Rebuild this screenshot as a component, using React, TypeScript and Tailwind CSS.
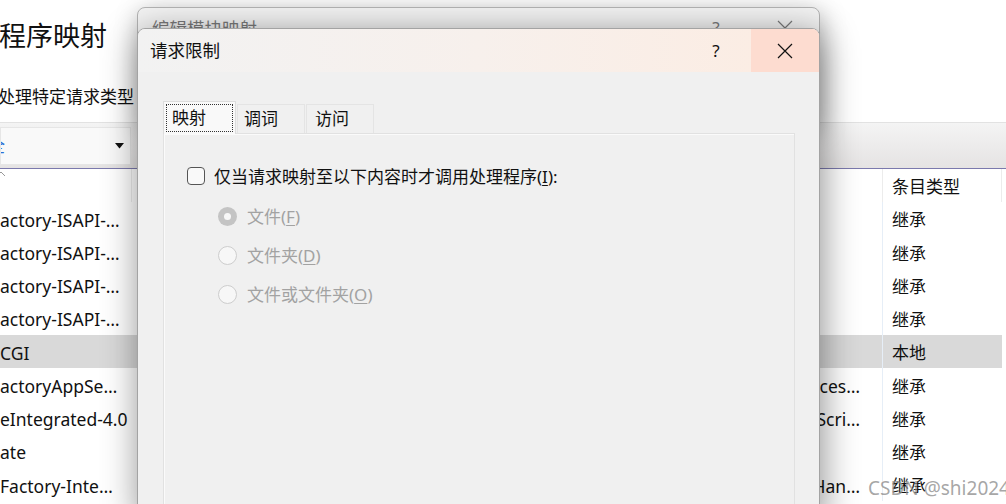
import React from "react";

const rows = [
  { name: "actory-ISAPI-…", path: "", type: "继承" },
  { name: "actory-ISAPI-…", path: "", type: "继承" },
  { name: "actory-ISAPI-…", path: "", type: "继承" },
  { name: "actory-ISAPI-…", path: "", type: "继承" },
  { name: "CGI", path: "", type: "本地", selected: true },
  { name: "actoryAppSe…", path: "System.Web.Services.Protocols.WebServiceHandlerFactory, System.Web.Services…", type: "继承" },
  { name: "eIntegrated-4.0", path: "System.Web.Script.Services.ScriptHandlerFactory, System.Web.Scri…", type: "继承" },
  { name: "ate", path: "", type: "继承" },
  { name: "Factory-Inte…", path: "System.Web.HttpForbiddenHandler, System.Web.HttpForbiddenHan…", type: "继承" },
];

function CloseIcon({ className }: { className?: string }) {
  return (
    <svg width="16" height="16" viewBox="0 0 16 16" className={className}>
      <path d="M1 1L15 15M15 1L1 15" stroke="currentColor" strokeWidth="1.2" fill="none" />
    </svg>
  );
}

function Radio({ checked, label, mnemonic }: { checked?: boolean; label: string; mnemonic: string }) {
  return (
    <div className="flex items-center h-[39px]">
      {checked ? (
        <div className="w-[19px] h-[19px] rounded-full bg-[#c4c4c4] flex items-center justify-center">
          <div className="w-[7px] h-[7px] rounded-full bg-[#f7f7f7]" />
        </div>
      ) : (
        <div className="w-[19px] h-[19px] rounded-full border border-[#cdcdcd] bg-[#f7f7f7]" />
      )}
      <span className="ml-[10px] text-[17px] text-[#a2a2a2] leading-none">
        {label}(<span className="underline underline-offset-2">{mnemonic}</span>)
      </span>
    </div>
  );
}

export default function App() {
  return (
    <div className="relative w-[1006px] h-[504px] overflow-hidden bg-white text-[#111] font-['Noto_Sans','Noto_Sans_CJK_SC',sans-serif]">
      {/* background window */}
      <div className="flex flex-col">
        <div className="h-[122px] pt-[14px]">
          <div className="text-[27px] leading-[44px] -ml-px">程序映射</div>
          <div className="mt-[27px] text-[17px] leading-[24px] -ml-[2px]">处理特定请求类型</div>
        </div>

        <div className="h-[46px] border-t border-[#e2e2e2] bg-gradient-to-b from-[#f4f4f4] to-[#e5e3e3] flex items-center">
          <div className="w-[131px] h-[38px] bg-[#f9f9f9] border border-[#e6e6e6] flex items-center justify-between overflow-hidden">
            <span className="-ml-[13px] text-[17px] text-[#2a6fd6]">全</span>
            <svg width="9" height="6" viewBox="0 0 9 6" className="mr-[6px]">
              <path d="M0 0H9L4.5 5.5Z" fill="#111" />
            </svg>
          </div>
        </div>
        <div className="h-[1px] bg-[#7b79ad]" />

        <div className="h-[33px] flex">
          <div className="w-[132px] border-r border-[#ececec] relative">
            <svg width="8" height="5" viewBox="0 0 8 5" className="absolute -left-[3px] top-[2px]">
              <path d="M0 5L4 1L8 5" stroke="#999" fill="none" />
            </svg>
          </div>
          <div className="w-[750px]" />
          <div className="w-[120px] border-l border-[#ececec] border-r flex items-center pt-[3px] pl-[9px] text-[17px]">条目类型</div>
        </div>

        {rows.map((r, i) => (
          <div key={i} className={`h-[33.25px] flex w-[1002px] ${r.selected ? "bg-[#d9d9d9]" : ""}`}>
            <div className="w-[132px] flex items-center pt-[2px] text-[17.5px] whitespace-nowrap overflow-hidden">{r.name}</div>
            <div className="w-[750px] flex items-center justify-end pt-[2px] pr-[22px] text-[17.5px] whitespace-nowrap overflow-hidden">{r.path}</div>
            <div className="w-[120px] border-l border-[#e6eef7] flex items-center pt-[3px] pl-[9px] text-[17px]">{r.type}</div>
          </div>
        ))}
      </div>

      {/* parent dialog behind */}
      <div className="absolute left-[137px] top-[7px] w-[683px] h-[120px] rounded-t-[8px] border border-[#b3b3b3] bg-[#f3f3f3] shadow-[2px_4px_24px_rgba(0,0,0,0.25)]">
        <div className="flex items-center h-[40px] text-[#7a7a7a]">
          <span className="pl-[14px] text-[17.5px]">编辑模块映射</span>
          <span className="ml-auto w-[70px] text-center text-[17px]">?</span>
          <div className="w-[68px] flex justify-center">
            <CloseIcon />
          </div>
        </div>
      </div>

      {/* request restrictions dialog */}
      <div className="absolute left-[137px] top-[28px] w-[683px] h-[490px] rounded-t-[8px] border border-[#a3a3a3] bg-[#f0f0f0] overflow-hidden shadow-[2px_6px_36px_rgba(0,0,0,0.45)]">
        <div className="h-[43px] flex items-center bg-gradient-to-r from-[#f2f2f2] via-[#f7f0ec] to-[#fcece2]">
          <span className="pl-[12px] text-[17.5px]">请求限制</span>
          <span className="ml-auto w-[70px] text-center text-[17px]">?</span>
          <div className="w-[68px] h-full bg-[#fddcd0] flex items-center justify-center text-[#111]">
            <CloseIcon />
          </div>
        </div>

        <div className="pl-[25px] pr-[24px] pt-[29px]">
          <div className="flex items-end gap-[1px] h-[32px]">
            <div className="relative z-10 -mb-px w-[73px] h-[33px] bg-[#f9f9f9] border border-[#dcdcdc] border-b-0 p-[2px]">
              <div className="h-full border border-dotted border-[#333] flex items-center pl-[5px] text-[17px]">映射</div>
            </div>
            <div className="w-[68px] h-[29px] bg-[#f0f0f0] border border-[#e4e4e4] border-b-0 flex items-center pl-[6px] text-[17px]">调词</div>
            <div className="w-[68px] h-[29px] bg-[#f0f0f0] border border-[#e4e4e4] border-b-0 flex items-center pl-[8px] text-[17px]">访问</div>
          </div>

          <div className="h-[420px] border border-[#e1e1e1] bg-[#f0f0f0] shadow-[inset_1px_1px_0_#fafafa]">
            <div className="pt-[33px] pl-[23px] flex items-center">
              <div className="w-[18px] h-[18px] rounded-[4px] border border-[#555] bg-[#f9f9f9]" />
              <span className="ml-[9px] text-[17px] leading-none">
                仅当请求映射至以下内容时才调用处理程序(<span className="underline underline-offset-2">I</span>):
              </span>
            </div>
            <div className="pl-[54px] pt-[12px] flex flex-col">
              <Radio checked label="文件" mnemonic="F" />
              <Radio label="文件夹" mnemonic="D" />
              <Radio label="文件或文件夹" mnemonic="O" />
            </div>
          </div>
        </div>
      </div>

      <div className="absolute left-[868px] top-[474px] text-[19px] whitespace-nowrap text-[#8f8f8f]/80">CSDN @shi2024</div>
    </div>
  );
}
